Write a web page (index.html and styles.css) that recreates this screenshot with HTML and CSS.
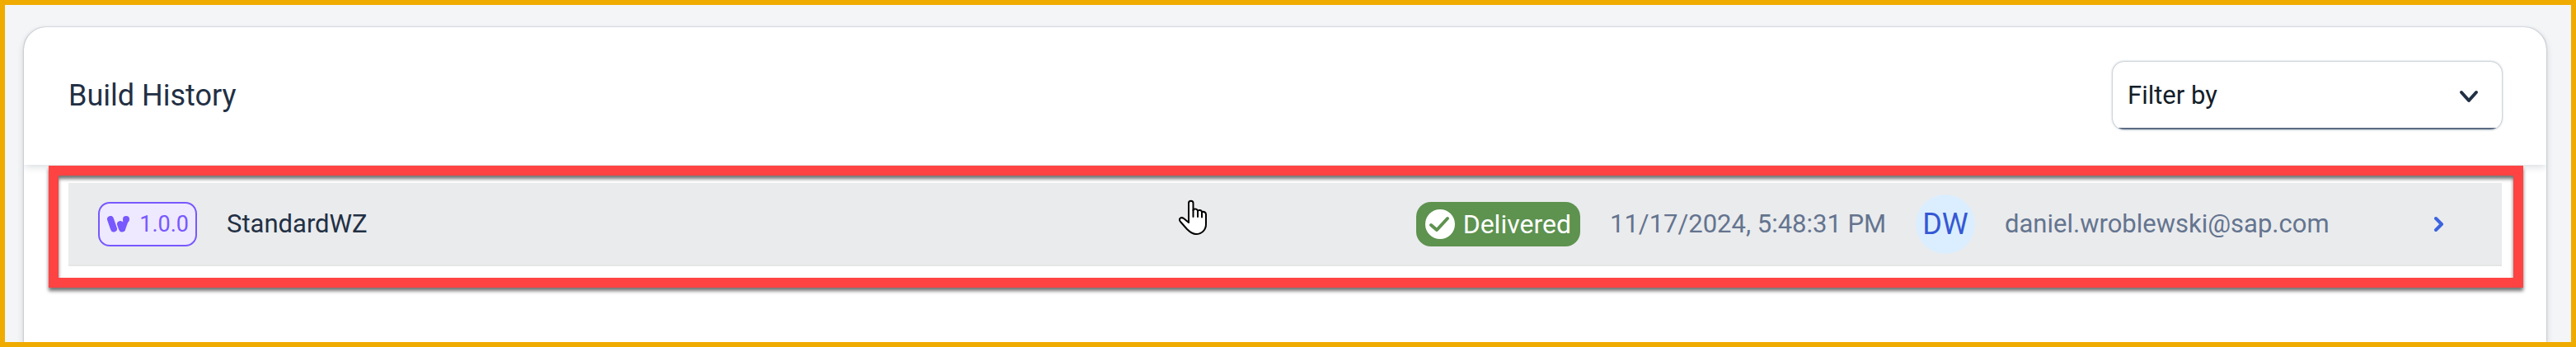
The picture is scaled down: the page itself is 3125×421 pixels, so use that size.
FILE: index.html
```html
<!DOCTYPE html>
<html lang="en">
<head>
<meta charset="utf-8">
<title>Build History</title>
<link rel="stylesheet" href="styles.css">
</head>
<body class="page">
  <main class="card">
    <header class="card-header">
      <h1 class="title">Build History</h1>
      <div class="filter">
        <select class="filter-select" aria-label="Filter by">
          <option>Filter by</option>
        </select>
        <svg class="filter-arrow" viewBox="0 0 24 16" aria-hidden="true"><path d="M3 3l9 10 9-10"/></svg>
      </div>
    </header>
    <section class="highlight">
      <div class="row">
        <span class="version">
          <svg class="version-icon" viewBox="0 0 28 20" aria-hidden="true">
            <path class="stroke" d="M4 4l4 11.500"/>
            <path class="stroke" d="M16 10l2 5.500"/>
            <path class="leg" d="M23 5l-4 11"/>
            <circle cx="23" cy="4" r="4"/>
          </svg>
          <span>1.0.0</span>
        </span>
        <span class="name">StandardWZ</span>
        <span class="status">
          <svg class="status-icon" viewBox="0 0 36 36" aria-hidden="true"><circle cx="18" cy="18" r="18"/><path d="M7 19l7 6 13-14"/></svg>
          <span>Delivered</span>
        </span>
        <time class="muted">11/17/2024, 5:48:31 PM</time>
        <span class="avatar">DW</span>
        <span class="muted">daniel.wroblewski@sap.com</span>
        <button class="open" type="button" aria-label="Open build">
          <svg class="open-icon" viewBox="0 0 12 20" aria-hidden="true"><path d="M2 3l7 7-7 7"/></svg>
        </button>
      </div>
      <svg class="pointer" viewBox="0 0 36 44" aria-hidden="true">
        <path d="M12 28V4.500a2.700 2.700 0 0 1 5.500 0V13c1-2 5-2 5.500 1 1-2 5-1 5 1.500 2-1.500 5 0 5 2.500v12c0 7-5 12-12 12-5 0-8-3-11-6L2 27c-3-4 1-6 4-4z"/>
        <path d="M17.500 13v8M23 14v7M28 15.500v6"/>
      </svg>
    </section>
  </main>
</body>
</html>
```
FILE: styles.css
```css
* { box-sizing: border-box; }

.page {
  margin: 0;
  min-height: 100vh;
  display: flex;
  border: 6px solid #f0ab00;
  background: #f4f5f7;
  padding: 27px 30px 0 23px;
  font-family: Roboto, "Liberation Sans", sans-serif;
  font-size: 31px;
  color: #223044;
  overflow: hidden;
}

.card {
  flex: 1;
  background: #fff;
  border-radius: 27px 27px 0 0;
  box-shadow: 0 0 2px rgba(34, 53, 72, .4), 0 4px 9px rgba(34, 53, 72, .2);
}

.card-header {
  display: flex;
  align-items: center;
  justify-content: space-between;
  height: 167px;
  padding: 0 54px 2px;
  border-radius: 27px 27px 0 0;
  box-shadow: 0 4px 9px -1px rgba(34, 53, 72, .16);
  clip-path: inset(0 0 -20px 0);
}

.title {
  margin: 0;
  font-size: 36px;
  font-weight: 400;
}

.filter {
  position: relative;
  width: 472px;
}

.filter-select {
  display: block;
  appearance: none;
  width: 100%;
  height: 82px;
  padding: 0 72px 0 18px;
  border: 0;
  border-radius: 14px;
  background: linear-gradient(#5b6b83, #5b6b83) bottom / 100% 2px no-repeat #fff;
  box-shadow: 0 0 3px rgba(85, 107, 130, .8);
  font: inherit;
  color: #131e29;
}

.filter-arrow {
  position: absolute;
  right: 28px;
  top: 34px;
  width: 24px;
  height: 16px;
  fill: none;
  stroke: #223044;
  stroke-width: 4;
  stroke-linecap: round;
  stroke-linejoin: round;
  pointer-events: none;
}

.highlight {
  position: relative;
  margin: 1px 28px 0 30px;
  padding: 21px 26px 26px 24px;
}

.highlight::after {
  content: "";
  position: absolute;
  inset: 0;
  border: 12px solid #ff4343;
  filter: drop-shadow(0 4px 2px rgba(0, 0, 0, .55));
  pointer-events: none;
}

.row {
  display: grid;
  grid-template-columns: auto 1fr 199px 335px 72px 455px 72px;
  column-gap: 36px;
  align-items: center;
  height: 101px;
  padding: 0 40px 0 36px;
  background: #eaebed;
  border-bottom: 2px solid #e5e5e5;
  white-space: nowrap;
}

.version {
  display: flex;
  align-items: center;
  justify-content: space-between;
  width: 120px;
  height: 54px;
  padding: 0 8px 0 9px;
  border: 2px solid #7858ff;
  border-radius: 14px;
  background: #eee9ff;
  color: #7858ff;
  font-size: 27px;
}

.version-icon {
  width: 28px;
  height: 20px;
  fill: #7858ff;
}

.version-icon .stroke,
.version-icon .leg {
  stroke: #7858ff;
  stroke-width: 8;
  stroke-linecap: round;
}

.version-icon .leg { stroke-width: 6; }

.status {
  display: flex;
  align-items: center;
  justify-content: space-between;
  height: 54px;
  padding: 0 11px;
  border-radius: 18px;
  background: #5d924f;
  color: #fff;
  font-size: 32px;
}

.status-icon {
  width: 36px;
  height: 36px;
  fill: #fff;
}

.status-icon path {
  fill: none;
  stroke: #5d924f;
  stroke-width: 4;
  stroke-linecap: round;
  stroke-linejoin: round;
}

.muted { color: #64748f; }

.avatar {
  display: grid;
  place-items: center;
  height: 72px;
  border-radius: 50%;
  background: #dbeeff;
  color: #3558d4;
  font-size: 36px;
}

.open {
  display: grid;
  place-items: center;
  height: 72px;
  padding: 0;
  border: 0;
  background: none;
}

.open-icon {
  width: 12px;
  height: 20px;
  fill: none;
  stroke: #3c64e0;
  stroke-width: 4;
  stroke-linecap: round;
  stroke-linejoin: round;
}

.pointer {
  position: absolute;
  left: 1371px;
  top: 41px;
  width: 36px;
  height: 44px;
  fill: #fff;
  stroke: #000;
  stroke-width: 2;
  stroke-linecap: round;
  stroke-linejoin: round;
}
```
